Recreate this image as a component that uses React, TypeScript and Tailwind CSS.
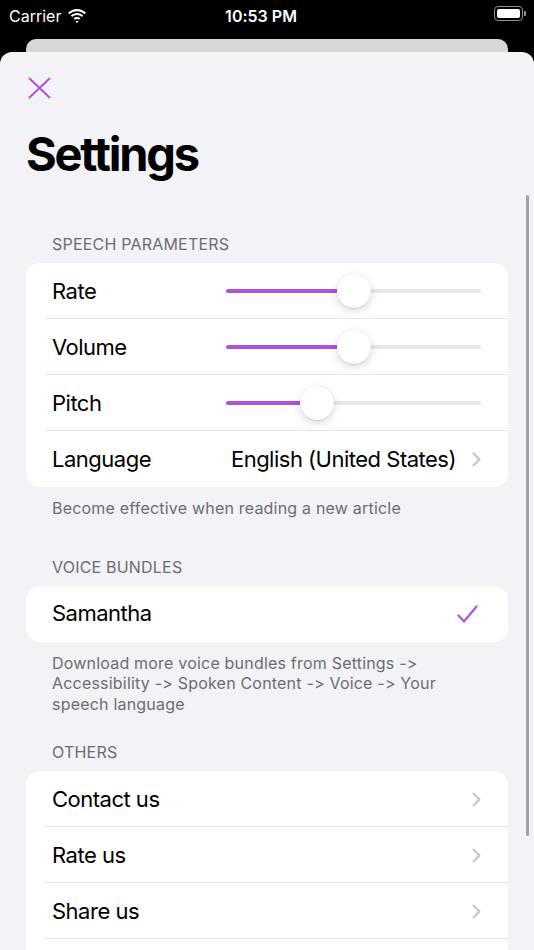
import React from "react";

const PURPLE = "#af52de";

function Wifi() {
  return (
    <svg width="20" height="14" viewBox="0 0 20 14" fill="#fff">
      <path d="M10 2.2c2.9 0 5.6 1.1 7.6 3l1.4-1.5C16.6 1.4 13.4 0 10 0S3.4 1.4 1 3.7l1.4 1.5c2-1.9 4.7-3 7.6-3z" />
      <path d="M10 6.1c1.8 0 3.5.7 4.8 1.9l1.4-1.5C14.5 4.9 12.3 4 10 4s-4.5.9-6.2 2.5L5.2 8c1.3-1.2 3-1.9 4.8-1.9z" />
      <path d="M10 9.9c.8 0 1.5.3 2 .8l1.4-1.5C12.5 8.4 11.3 7.9 10 7.9s-2.5.5-3.4 1.3L8 10.7c.5-.5 1.2-.8 2-.8z" />
      <path d="M10 14l1.5-1.6c-.4-.4-.9-.6-1.5-.6s-1.1.2-1.5.6z" />
    </svg>
  );
}

function Battery() {
  return (
    <div className="flex items-center">
      <div className="w-[29px] h-[15px] rounded-[4px] border border-[#8e8e8e] p-[2px]">
        <div className="w-full h-full rounded-[2px] bg-white" />
      </div>
      <div className="w-[2px] h-[5px] rounded-r-[1px] bg-[#8e8e8e] ml-[1px]" />
    </div>
  );
}

function Chevron() {
  return (
    <svg width="9" height="15" viewBox="0 0 9 15" fill="none" stroke="#c4c4c7" strokeWidth="2" strokeLinecap="round" strokeLinejoin="round">
      <path d="M1.5 1.5l6 6-6 6" />
    </svg>
  );
}

function Slider({ value }: { value: number }) {
  return (
    <div className="relative w-[255px] h-[34px] flex items-center">
      <div className="w-full h-[4px] rounded-full bg-[#e5e5ea]" />
      <div className="absolute left-0 h-[4px] rounded-full bg-[#af52de]" style={{ width: `${value}px` }} />
      <div
        className="absolute w-[34px] h-[34px] rounded-full bg-white shadow-[0_3px_8px_rgba(0,0,0,0.15),0_1px_1px_rgba(0,0,0,0.08),0_0_0_0.5px_rgba(0,0,0,0.04)]"
        style={{ left: `${value - 17}px` }}
      />
    </div>
  );
}

function Row({ children, last }: { children?: React.ReactNode; last?: boolean }) {
  return (
    <div className="relative h-[56px] flex items-center pl-[26px] pr-[27px]">
      {children}
      {!last && <div className="absolute left-[19px] right-0 bottom-0 h-px bg-[#e3e3e8]" />}
    </div>
  );
}

function Header({ children }: { children: React.ReactNode }) {
  return (
    <div className="px-[52px] h-[20px] leading-[20px] text-[16px] tracking-[0.2px] text-[#6d6d72] uppercase mb-[9px]">{children}</div>
  );
}

function Footer({ children }: { children: React.ReactNode }) {
  return <div className="pl-[52px] pr-[90px] mt-[11px] text-[16px] leading-[20.5px] tracking-[0.2px] text-[#6d6d72]">{children}</div>;
}

export default function App() {
  const label = "text-[22px] tracking-[-0.5px] text-black";
  return (
    <div
      className="relative w-[534px] h-[950px] overflow-hidden bg-black flex flex-col [font-feature-settings:'calt'_0,'liga'_0]"
      style={{ fontFamily: "Inter, 'Noto Sans', sans-serif" }}
    >
      {/* status bar */}
      <div className="h-[39px] shrink-0 relative text-white">
        <div className="absolute left-[9px] top-[4px] flex items-center gap-[6px]">
          <span className="text-[16px]">Carrier</span>
          <Wifi />
        </div>
        <div className="absolute left-0 right-0 top-[4px] flex justify-center pr-[12px]">
          <span className="text-[16px] font-semibold">10:53 PM</span>
        </div>
        <div className="absolute right-[8px] top-[6px]">
          <Battery />
        </div>
      </div>
      {/* presenting card behind the sheet */}
      <div className="shrink-0 mx-[26px] h-[13px] rounded-t-[10px] bg-[#d7d7d7]" />
      {/* sheet */}
      <div className="flex-1 min-h-0 rounded-t-[12px] bg-[#f2f2f7] relative overflow-hidden">
        <div className="pl-[28px] pt-[25px]">
          <svg width="23" height="22" viewBox="0 0 23 22" stroke={PURPLE} strokeWidth="2" strokeLinecap="round">
            <path d="M1.5 1.5l20 19M21.5 1.5l-20 19" />
          </svg>
        </div>
        <div className="pl-[26px] mt-[26px] h-[58px] leading-[58px] text-[47px] font-bold tracking-[-2.2px] text-black">Settings</div>

        <div className="mt-[51px]">
          <Header>Speech Parameters</Header>
          <div className="mx-[26px] rounded-[14px] bg-white overflow-hidden">
            <Row>
              <span className={`${label} flex-1`}>Rate</span>
              <Slider value={128} />
            </Row>
            <Row>
              <span className={`${label} flex-1`}>Volume</span>
              <Slider value={128} />
            </Row>
            <Row>
              <span className={`${label} flex-1`}>Pitch</span>
              <Slider value={91} />
            </Row>
            <Row last>
              <span className={`${label} flex-1`}>Language</span>
              <span className={label}>English (United States)</span>
              <span className="ml-[16px]"><Chevron /></span>
            </Row>
          </div>
          <Footer>Become effective when reading a new article</Footer>
        </div>

        <div className="mt-[38px]">
          <Header>Voice Bundles</Header>
          <div className="mx-[26px] rounded-[14px] bg-white overflow-hidden">
            <Row last>
              <span className={`${label} flex-1`}>Samantha</span>
              <svg width="21" height="18" viewBox="0 0 21 18" fill="none" stroke={PURPLE} strokeWidth="2.2" strokeLinecap="round" strokeLinejoin="round" className="mr-[3px]">
                <path d="M1.5 10.5l5.5 6L19.5 1.5" />
              </svg>
            </Row>
          </div>
          <Footer>Download more voice bundles from Settings -&gt; Accessibility -&gt; Spoken Content -&gt; Voice -&gt; Your speech language</Footer>
        </div>

        <div className="mt-[28px]">
          <Header>Others</Header>
          <div className="mx-[26px] rounded-[14px] bg-white overflow-hidden">
            {["Contact us", "Rate us", "Share us"].map((t) => (
              <Row key={t}>
                <span className={`${label} flex-1`}>{t}</span>
                <Chevron />
              </Row>
            ))}
            {/* next row continues below the fold */}
            <Row last />
          </div>
        </div>

        {/* scroll indicator */}
        <div className="absolute left-[526px] top-[143px] w-[3px] h-[641px] rounded-full bg-[#a3a3a6]" />
      </div>
    </div>
  );
}
